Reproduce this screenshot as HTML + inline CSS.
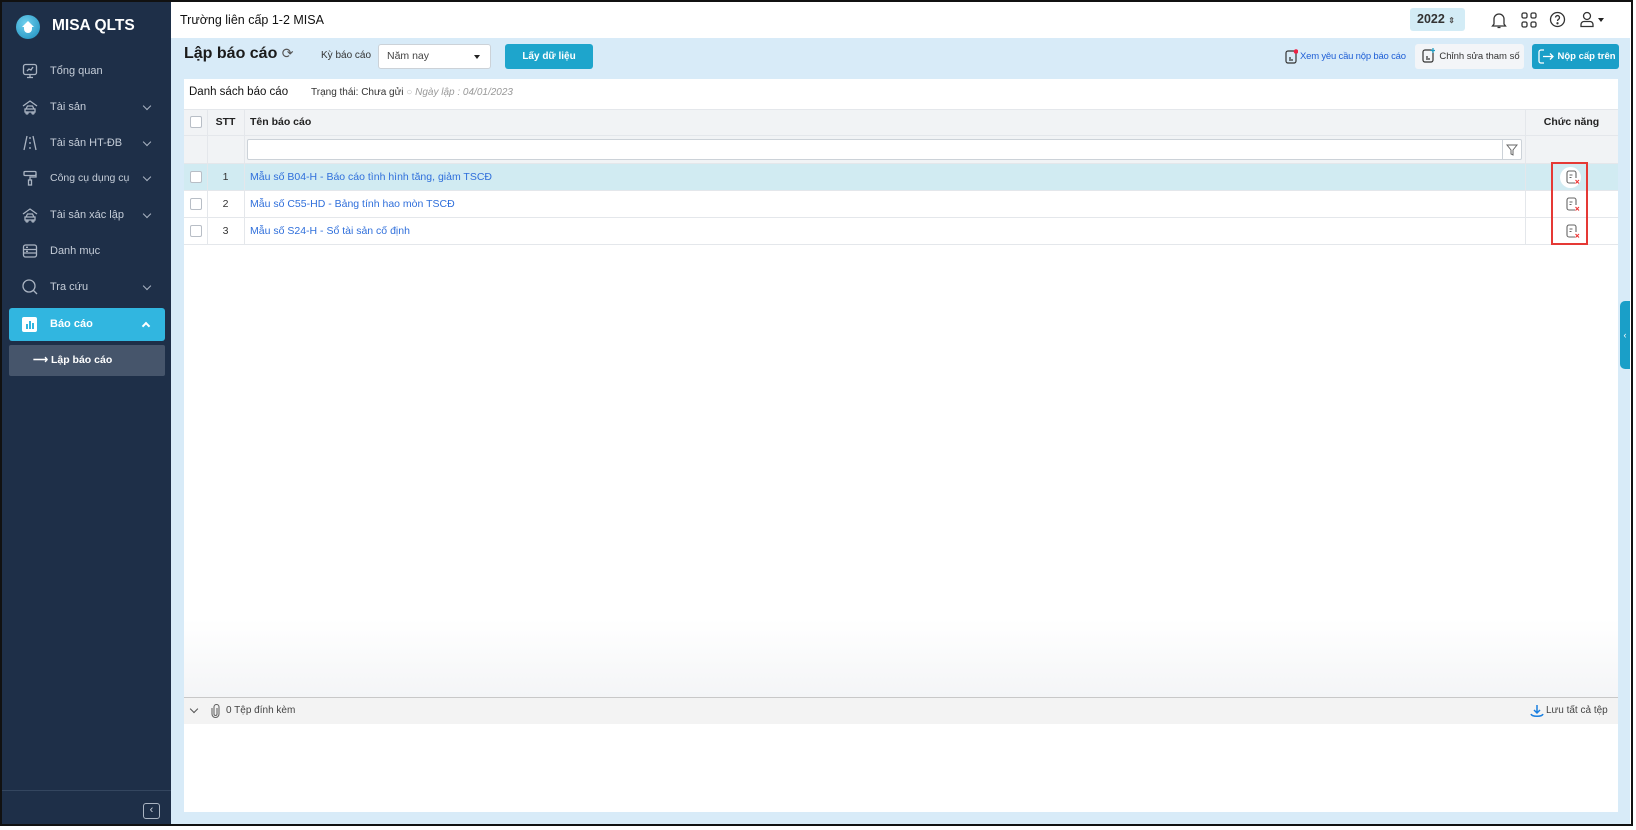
<!DOCTYPE html>
<html><head><meta charset="utf-8"><style>
*{box-sizing:border-box;margin:0;padding:0}
body{width:1636px;height:830px;position:relative;background:#fff;font-family:"Liberation Sans",sans-serif;overflow:hidden;font-size:11px;color:#222}
.a{position:absolute}
#frame{left:0;top:0;width:1633px;height:826px;border:2px solid #111;border-top-width:2px}
#sb{left:2px;top:2px;width:169px;height:822px;background:#1e2f48}
.mi{position:absolute;left:0;width:169px;height:30px;color:#c5cdd8;font-size:11px;line-height:30px}
.mi .t{position:absolute;left:48px}
.mi .ch{position:absolute;left:142px;top:11px;width:6px;height:6px;border-right:1.5px solid #aab4c2;border-bottom:1.5px solid #aab4c2;transform:rotate(45deg)}
.mi svg{position:absolute;left:20px;top:7px}
#hd{left:171px;top:2px;width:1459px;height:36px;background:#fff}
#ct{left:171px;top:38px;width:1459px;height:786px;background:#d8ebf8}
.btn{position:absolute;border-radius:3px;font-size:10px;text-align:center;white-space:nowrap}
.cb{position:absolute;left:6px;width:12px;height:12px;border:1px solid #b8bec6;border-radius:2px;background:#fff}
.row{position:absolute;left:0;width:1434px;height:27px;border-bottom:1px solid #e4e7eb;font-size:10.5px;line-height:26px}
.row .n{position:absolute;left:23px;width:37px;text-align:center;color:#333}
.row .l{position:absolute;left:66px;color:#2f6fdb}
.vl{position:absolute;top:0;bottom:0;width:1px;background:#e4e7eb}
.ic{position:absolute;left:1382px;top:6px}
</style></head><body>
<div id="frame" class="a"></div>
<div id="sb" class="a">
 <div class="a" style="left:14px;top:13px;width:24px;height:24px;border-radius:50%;background:radial-gradient(circle at 40% 35%,#6fd0ee,#1a8cbc)"></div>
 <div class="a" style="left:20px;top:19px;width:0;height:0;border-left:6px solid transparent;border-right:6px solid transparent;border-bottom:6px solid #fff"></div>
 <div class="a" style="left:22px;top:24px;width:8px;height:7px;background:#fff;border-radius:0 0 4px 4px"></div>
 <div class="a" style="left:50px;top:15px;color:#fff;font-weight:bold;font-size:15.5px">MISA QLTS</div>
 <div class="mi" style="top:54px"><svg width="16" height="16" fill="none" stroke="#aab4c2" stroke-width="1.3"><rect x="1.5" y="1.5" width="13" height="10" rx="2"/><path d="M8 11.5v3M5 14.5h6M5 8l2-2 2 1 2-3"/></svg><span class="t">Tổng quan</span></div>
 <div class="mi" style="top:90px"><svg width="16" height="16" fill="none" stroke="#aab4c2" stroke-width="1.3"><path d="M1 7l7-5 7 5M3 10h10v3H3zM4 10l1.5-3h5L12 10"/><circle cx="5" cy="14" r="1"/><circle cx="11" cy="14" r="1"/></svg><span class="t">Tài sản</span><span class="ch"></span></div>
 <div class="mi" style="top:126px"><svg width="16" height="16" fill="none" stroke="#aab4c2" stroke-width="1.3"><path d="M5 1L2 15M11 1l3 14M8 2v2M8 7v2M8 12v2"/></svg><span class="t">Tài sản HT-ĐB</span><span class="ch"></span></div>
 <div class="mi" style="top:161px"><svg width="16" height="16" fill="none" stroke="#aab4c2" stroke-width="1.3"><rect x="2" y="1.5" width="12" height="4" rx="1"/><path d="M14 4v3H8v3"/><rect x="6.5" y="10" width="3" height="5"/></svg><span class="t" style="font-size:10.5px">Công cụ dụng cụ</span><span class="ch"></span></div>
 <div class="mi" style="top:198px"><svg width="16" height="16" fill="none" stroke="#aab4c2" stroke-width="1.3"><path d="M1 7l7-5 7 5M3 10h10v3H3zM4 10l1.5-3h5L12 10"/><circle cx="5" cy="14" r="1"/><circle cx="11" cy="14" r="1"/></svg><span class="t">Tài sản xác lập</span><span class="ch"></span></div>
 <div class="mi" style="top:234px"><svg width="16" height="16" fill="none" stroke="#aab4c2" stroke-width="1.3"><rect x="1.5" y="2" width="13" height="12" rx="2"/><path d="M1.5 6.5h13M1.5 10h13M4 4.3h2M4 8.3h2"/></svg><span class="t">Danh mục</span></div>
 <div class="mi" style="top:270px"><svg width="16" height="16" fill="none" stroke="#aab4c2" stroke-width="1.3"><circle cx="7" cy="7" r="6"/><path d="M11.5 11.5L15 15"/></svg><span class="t">Tra cứu</span><span class="ch"></span></div>
 <div class="a" style="left:7px;top:306px;width:156px;height:33px;background:#31b6e0;border-radius:3px;color:#fff;font-weight:bold;font-size:11px;line-height:33px">
  <div class="a" style="left:13px;top:9px;width:15px;height:15px;background:#fff;border-radius:2px"></div>
  <div class="a" style="left:17px;top:16px;width:1.5px;height:5px;background:#31b6e0"></div><div class="a" style="left:20px;top:13px;width:1.5px;height:8px;background:#31b6e0"></div><div class="a" style="left:23px;top:15px;width:1.5px;height:6px;background:#31b6e0"></div>
  <span class="a" style="left:41px">Báo cáo</span>
  <span class="a" style="left:134px;top:15px;width:6px;height:6px;border-left:2px solid #fff;border-top:2px solid #fff;transform:rotate(45deg)"></span>
 </div>
 <div class="a" style="left:7px;top:343px;width:156px;height:31px;background:#46556b;border-radius:2px;color:#fff;font-weight:bold;font-size:10.5px;line-height:31px"><span class="a" style="left:24px">⟶ Lập báo cáo</span></div>
 <div class="a" style="left:0;top:788px;width:169px;height:1px;background:#34465f"></div>
 <div class="a" style="left:141px;top:801px;width:17px;height:16px;border:1.3px solid #aab4c2;border-radius:3px;color:#cfd6df;font-size:11px;line-height:13px;text-align:center">‹</div>
</div>
<div id="hd" class="a">
 <div class="a" style="left:9px;top:11px;font-size:12.5px;color:#111">Trường liên cấp 1-2 MISA</div>
 <div class="a" style="left:1239px;top:6px;width:55px;height:23px;background:#d3ecf6;border-radius:3px;font-weight:bold;font-size:12.5px;line-height:23px;padding-left:7px;color:#333">2022 <span style="font-size:8px;color:#555">⇕</span></div>
 <svg class="a" style="left:1320px;top:9px" width="16" height="18" fill="none" stroke="#333" stroke-width="1.3"><path d="M3 13V8a5 5 0 0110 0v5l1.5 2h-13zM6.5 16.5h3"/></svg>
 <svg class="a" style="left:1350px;top:10px" width="16" height="16" fill="none" stroke="#333" stroke-width="1.3"><rect x="1" y="1" width="5" height="5" rx="1.5"/><rect x="10" y="1" width="5" height="5" rx="1.5"/><rect x="1" y="10" width="5" height="5" rx="1.5"/><rect x="10" y="10" width="5" height="5" rx="1.5"/></svg>
 <svg class="a" style="left:1378px;top:9px" width="17" height="17" fill="none" stroke="#333" stroke-width="1.3"><circle cx="8.5" cy="8.5" r="7"/><path d="M6.5 6.5a2 2 0 113 1.8c-.8.4-1 .8-1 1.7"/><circle cx="8.5" cy="12.3" r=".5" fill="#333"/></svg>
 <svg class="a" style="left:1408px;top:9px" width="16" height="17" fill="none" stroke="#333" stroke-width="1.3"><circle cx="8" cy="5" r="3.5"/><path d="M2 15.5v-2a3 3 0 013-3h6a3 3 0 013 3v2z"/></svg>
 <div class="a" style="left:1427px;top:16px;border-left:3.5px solid transparent;border-right:3.5px solid transparent;border-top:4px solid #222"></div>
</div>
<div id="ct" class="a">
 <div class="a" style="left:13px;top:7px;font-size:16px;font-weight:bold;color:#1b1b1b">Lập báo cáo <span style="font-weight:normal;color:#555;font-size:14px">⟳</span></div>
 <div class="a" style="left:150px;top:12px;font-size:10px;color:#333">Kỳ báo cáo</div>
 <div class="a" style="left:207px;top:6px;width:113px;height:25px;background:#fff;border:1px solid #ccd2d8;border-radius:3px;font-size:10.5px;line-height:23px;padding-left:8px;color:#444">Năm nay<span class="a" style="left:95px;top:10px;border-left:3.5px solid transparent;border-right:3.5px solid transparent;border-top:4px solid #222"></span></div>
 <div class="btn" style="left:334px;top:6px;width:88px;height:25px;background:#1ea5cc;color:#fff;line-height:25px;font-weight:bold">Lấy dữ liệu</div>
 <svg class="a" style="left:1114px;top:11px" width="13" height="15" fill="none" stroke="#333" stroke-width="1.2"><rect x="1" y="2" width="10" height="12" rx="2"/><path d="M4 9h2M4 11h4"/><circle cx="11" cy="2.5" r="2.3" fill="#e24" stroke="none"/></svg>
 <div class="a" style="left:1129px;top:13px;font-size:9.5px;color:#1f5fd6;letter-spacing:-0.2px;white-space:nowrap">Xem yêu cầu nộp báo cáo</div>
 <div class="btn" style="left:1244px;top:6px;width:109px;height:25px;background:#f3f5f8;color:#333;line-height:25px;padding-left:20px;font-size:9.5px">Chỉnh sửa tham số</div>
 <svg class="a" style="left:1251px;top:10px" width="13" height="15" fill="none" stroke="#333" stroke-width="1.2"><rect x="1" y="2" width="10" height="12" rx="2"/><path d="M4 9h2M4 11h4"/><path d="M11 0v5M8.5 2.5h5" stroke="#1a9cc4"/></svg>
 <div class="btn" style="left:1361px;top:6px;width:87px;height:25px;background:#1a9fc8;color:#fff;line-height:25px;padding-left:22px;font-weight:bold;font-size:9.5px">Nộp cấp trên</div>
 <svg class="a" style="left:1367px;top:11px" width="16" height="15" fill="none" stroke="#fff" stroke-width="1.3"><path d="M6 1H3a2 2 0 00-2 2v9a2 2 0 002 2h3M5 7.5h10M12 4.5l3 3-3 3"/></svg>
 <div class="a" style="left:13px;top:41px;width:1434px;height:733px;background:#fff">
  <div class="a" style="left:5px;top:7px;font-size:11.5px;color:#111">Danh sách báo cáo</div>
  <div class="a" style="left:127px;top:8px;font-size:10px;color:#333">Trạng thái: Chưa gửi <span style="color:#bbb">○</span> <i style="color:#999">Ngày lập : 04/01/2023</i></div>
  <div class="a" style="left:0;top:30px;width:1434px;height:27px;background:#f1f3f5;border-top:1px solid #e4e7eb;border-bottom:1px solid #e4e7eb;font-weight:bold;font-size:10.5px;line-height:25px">
   <div class="cb" style="top:6px"></div>
   <span class="a" style="left:23px;width:37px;text-align:center">STT</span>
   <span class="a" style="left:66px">Tên báo cáo</span>
   <span class="a" style="left:1341px;width:93px;text-align:center">Chức năng</span>
  </div>
  <div class="a" style="left:0;top:57px;width:1434px;height:28px;background:#f1f3f5;border-bottom:1px solid #e4e7eb">
   <div class="a" style="left:63px;top:3px;width:1275px;height:21px;background:#fff;border:1px solid #ccd2d8;border-radius:2px"></div>
   <div class="a" style="left:1318px;top:3px;width:1px;height:21px;background:#ccd2d8"></div>
   <svg class="a" style="left:1322px;top:8px" width="12" height="12" fill="none" stroke="#666" stroke-width="1"><path d="M1 1h10L7 6v5L5 10V6z"/></svg>
  </div>
  <div class="row" style="top:85px;background:#d1ebf2"><div class="cb" style="top:7px"></div><span class="n">1</span><span class="l">Mẫu số B04-H - Báo cáo tình hình tăng, giảm TSCĐ</span><div class="a" style="left:1376px;top:3px;width:21px;height:21px;border-radius:50%;background:#fff"></div><svg class="ic" width="14" height="15" fill="none" stroke="#666" stroke-width="1.1"><path d="M9 13H3a2 2 0 01-2-2V3a2 2 0 012-2h5a2 2 0 012 2v5M3.5 5h3M3.5 7.5h2"/><path d="M9.5 10l3.5 3.5M13 10l-3.5 3.5" stroke="#e33"/></svg></div>
  <div class="row" style="top:112px"><div class="cb" style="top:7px"></div><span class="n">2</span><span class="l">Mẫu số C55-HD - Bảng tính hao mòn TSCĐ</span><svg class="ic" width="14" height="15" fill="none" stroke="#666" stroke-width="1.1"><path d="M9 13H3a2 2 0 01-2-2V3a2 2 0 012-2h5a2 2 0 012 2v5M3.5 5h3M3.5 7.5h2"/><path d="M9.5 10l3.5 3.5M13 10l-3.5 3.5" stroke="#e33"/></svg></div>
  <div class="row" style="top:139px"><div class="cb" style="top:7px"></div><span class="n">3</span><span class="l">Mẫu số S24-H - Sổ tài sản cố định</span><svg class="ic" width="14" height="15" fill="none" stroke="#666" stroke-width="1.1"><path d="M9 13H3a2 2 0 01-2-2V3a2 2 0 012-2h5a2 2 0 012 2v5M3.5 5h3M3.5 7.5h2"/><path d="M9.5 10l3.5 3.5M13 10l-3.5 3.5" stroke="#e33"/></svg></div>
  <div class="vl" style="left:23px;top:30px;height:136px"></div>
  <div class="vl" style="left:60px;top:30px;height:136px"></div>
  <div class="vl" style="left:1341px;top:30px;height:136px"></div>
  <div class="a" style="left:1367px;top:83px;width:37px;height:83px;border:2px solid #e53935"></div>
  <div class="a" style="left:0;top:540px;width:1434px;height:78px;background:linear-gradient(#fff,#f4f5f7)"></div>
  <div class="a" style="left:0;top:618px;width:1434px;height:27px;background:#f3f3f3;border-top:1.5px solid #c8c8c8;font-size:10px;line-height:25px;color:#444">
   <span class="a" style="left:7px;top:8px;width:6px;height:6px;border-right:1.3px solid #555;border-bottom:1.3px solid #555;transform:rotate(45deg)"></span>
   <svg class="a" style="left:27px;top:6px" width="9" height="14" fill="none" stroke="#666" stroke-width="1.1"><path d="M6 4v6a1.5 1.5 0 01-3 0V3a2.5 2.5 0 015 0v7a3.5 3.5 0 01-7 0V4"/></svg>
   <span class="a" style="left:42px">0 Tệp đính kèm</span>
   <svg class="a" style="left:1346px;top:6px" width="14" height="14" fill="none" stroke="#1a7fe0" stroke-width="1.5"><path d="M7 1v8M4 6l3 3 3-3M1 10c1 3 11 3 12 0"/></svg>
   <span class="a" style="left:1362px">Lưu tất cả tệp</span>
  </div>
 </div>
 <div class="a" style="left:1449px;top:263px;width:10px;height:68px;background:#1a9fc8;border-radius:5px 0 0 5px;color:#fff;font-size:9px;line-height:68px;text-align:center">‹</div>
</div>
</body></html>
